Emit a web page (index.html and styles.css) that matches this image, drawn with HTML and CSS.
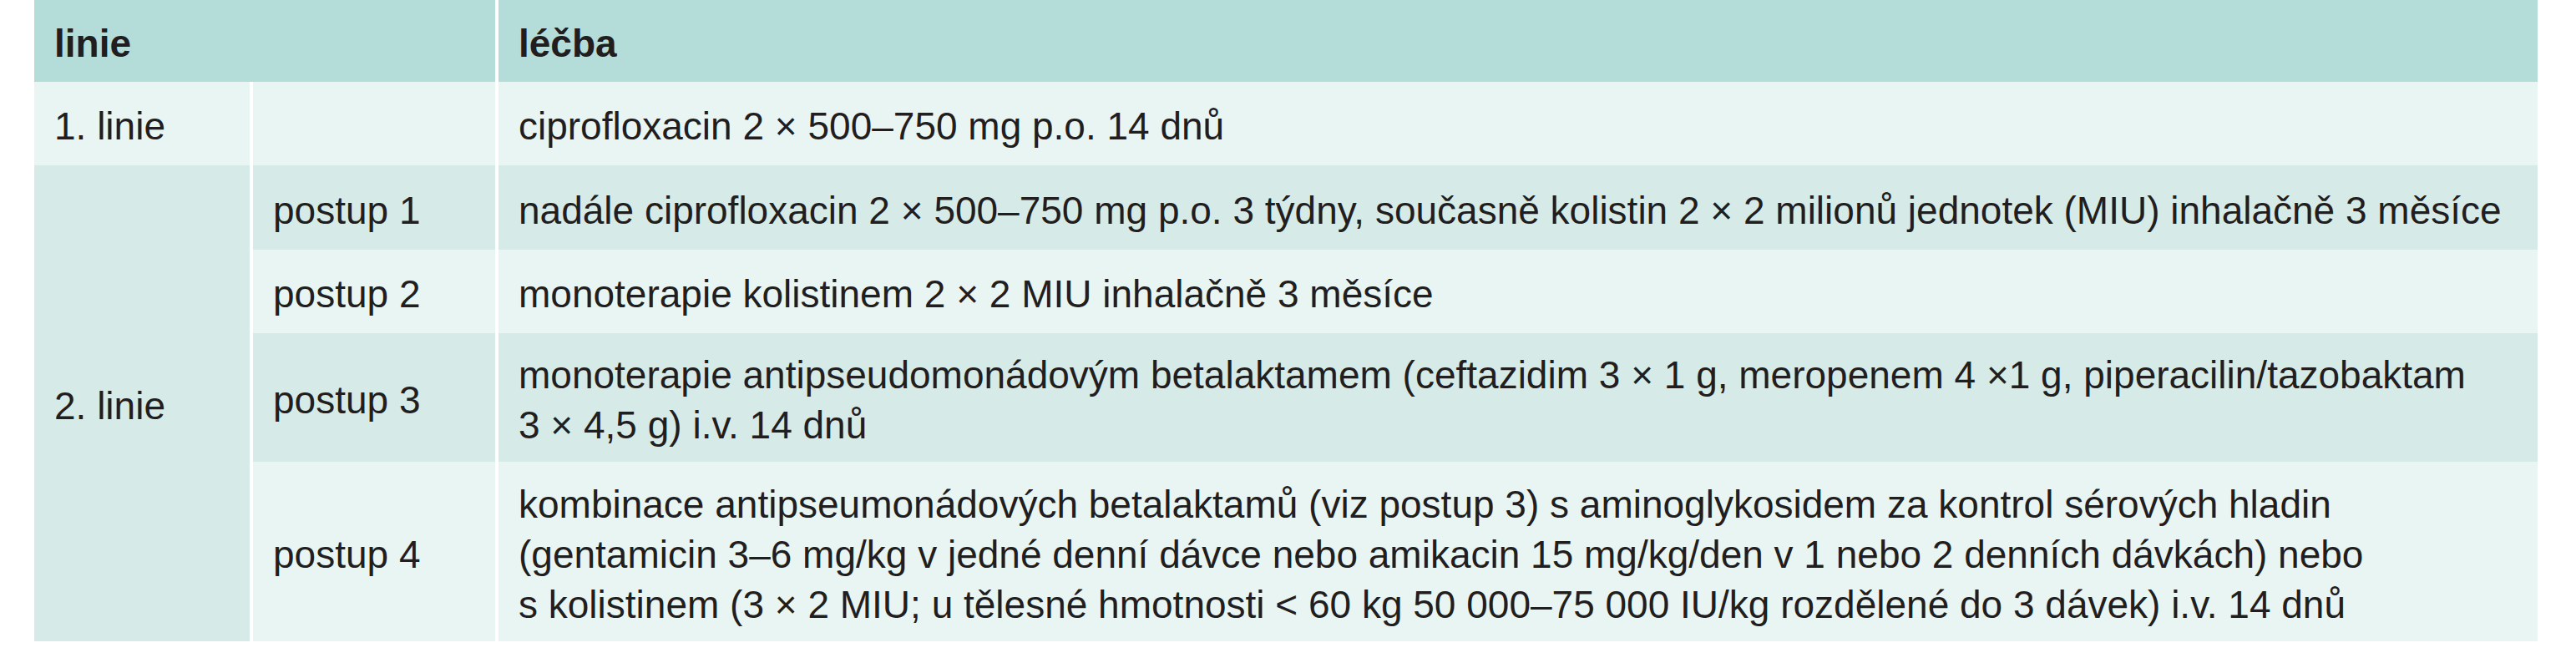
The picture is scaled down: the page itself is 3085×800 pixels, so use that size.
FILE: index.html
```html
<!DOCTYPE html>
<html lang="cs">
<head>
<meta charset="utf-8">
<title>Léčba</title>
<link rel="stylesheet" href="styles.css">
</head>
<body>
<div class="tbl">
  <div class="cell head span2 r1">linie</div>
  <div class="cell head r1">léčba</div>

  <div class="cell light r2">1. linie</div>
  <div class="cell light r2"></div>
  <div class="cell light r2">ciprofloxacin 2 × 500–750 mg p.o. 14 dnů</div>

  <div class="cell dark rowspan4">2. linie</div>

  <div class="cell dark r3">postup 1</div>
  <div class="cell dark r3">nadále ciprofloxacin 2 × 500–750 mg p.o. 3 týdny, současně kolistin 2 × 2 milionů jednotek (MIU) inhalačně 3 měsíce</div>

  <div class="cell light r4">postup 2</div>
  <div class="cell light r4">monoterapie kolistinem 2 × 2 MIU inhalačně 3 měsíce</div>

  <div class="cell dark r5">postup 3</div>
  <div class="cell dark r5"><span>monoterapie antipseudomonádovým betalaktamem (ceftazidim 3 × 1 g, meropenem 4 ×1 g, piperacilin/tazobaktam<br>3 × 4,5 g) i.v. 14 dnů</span></div>

  <div class="cell light r6">postup 4</div>
  <div class="cell light r6"><span>kombinace antipseumonádových betalaktamů (viz postup 3) s aminoglykosidem za kontrol sérových hladin<br>(gentamicin 3–6 mg/kg v jedné denní dávce nebo amikacin 15 mg/kg/den v 1 nebo 2 denních dávkách) nebo<br>s kolistinem (3 × 2 MIU; u tělesné hmotnosti &lt; 60 kg 50 000–75 000 IU/kg rozdělené do 3 dávek) i.v. 14 dnů</span></div>
</div>
</body>
</html>
```

FILE: styles.css
```css
html, body {
  margin: 0;
  padding: 0;
  background: #ffffff;
}

body {
  font-family: "Liberation Sans", Arial, sans-serif;
  font-size: 46px;
  line-height: 60px;
  color: #221e20;
}

.tbl {
  margin-left: 41px;
  width: 2998px;
  display: grid;
  grid-template-columns: 258px 290px 2442px;
  grid-template-rows: 98px 100px 101px 100px 154px 215px;
  column-gap: 4px;
  row-gap: 0;
  background: #ffffff;
}

.cell {
  display: flex;
  align-items: center;
  padding: 6px 24px 0;
  white-space: nowrap;
  box-sizing: border-box;
}

.head {
  background: #b4dcd9;
  font-weight: bold;
}

.span2 {
  grid-column: 1 / span 2;
}

.light {
  background: #e9f5f3;
}

.dark {
  background: #d6eae7;
}

.rowspan4 {
  grid-column: 1;
  grid-row: 3 / span 4;
}
```
